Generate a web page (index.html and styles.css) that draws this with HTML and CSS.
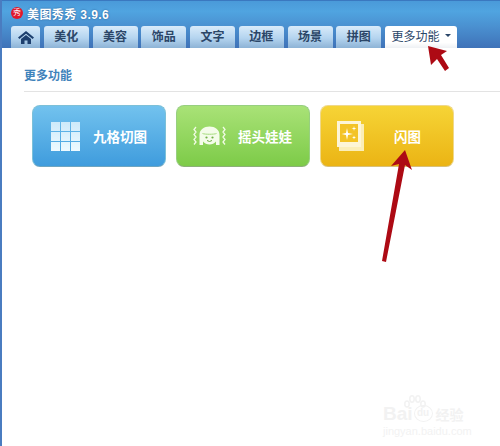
FILE: index.html
```html
<!doctype html>
<html>
<head>
<meta charset="utf-8">
<title>美图秀秀</title>
<link rel="stylesheet" href="styles.css">
</head>
<body>
<div id="wrap">
	<header>
		<div class="title">
			<span class="logo">秀</span>
			<span class="name">美图秀秀 3.9.6</span>
		</div>
		<ul class="tabs">
			<li class="home">
				<svg width="16" height="13" viewBox="0 0 16 13"><path d="M8 0 L16 6.6 L14.6 8 L8 2.7 L1.4 8 L0 6.6 Z" fill="#1d3f6e"/><path d="M3 8 L8 4 L13 8 V13 H9.5 V9.5 H6.5 V13 H3 Z" fill="#1d3f6e"/></svg>
			</li>
			<li>美化</li>
			<li>美容</li>
			<li>饰品</li>
			<li>文字</li>
			<li>边框</li>
			<li>场景</li>
			<li>拼图</li>
			<li class="on">更多功能<i class="caret"></i></li>
		</ul>
	</header>
	<div id="content">
		<h2>更多功能</h2>
		<div class="btns">
			<a class="btn blue" href="#">
				<svg class="ico1" width="29" height="29" viewBox="0 0 29 29"><defs><linearGradient id="g1" x1="0" y1="0" x2="0" y2="1"><stop offset="0" stop-color="#cdeafa"/><stop offset="1" stop-color="#eefaff"/></linearGradient></defs><path fill="url(#g1)" d="M0 0h9v9H0zM10 0h9v9h-9zM20 0h9v9h-9zM0 10h9v9H0zM10 10h9v9h-9zM20 10h9v9h-9zM0 20h9v9H0zM10 20h9v9h-9zM20 20h9v9h-9z"/></svg>
				<span>九格切图</span>
			</a>
			<a class="btn green" href="#">
				<svg class="ico2" width="33" height="20" viewBox="0 0 33 20">
					<path d="M3 1 L1 3.500 L3 6 L1 8.500 L3 11 L1 13.500 L3 16 L1 18.500 M30 1 L32 3.500 L30 6 L32 8.500 L30 11 L32 13.500 L30 16 L32 18.500" fill="none" stroke="#f1fbe4" stroke-width="1.300"/>
					<path d="M6.500 19 V9 C6.500 3.500 11 0.500 16.500 0.500 C22 0.500 26.500 3.500 26.500 9 V19 H23 V15.500 C21.500 17.500 19 18.500 16.500 18.500 C14 18.500 11.500 17.500 10 15.500 V19 Z" fill="#f4fce9"/>
					<path d="M9.500 7.500 C12 8.500 21 8.500 23.500 7.500" fill="none" stroke="#a5dc7c" stroke-width="1"/>
					<circle cx="13.500" cy="11.500" r="1.100" fill="#6fae45"/><circle cx="19.500" cy="11.500" r="1.100" fill="#6fae45"/>
					<path d="M14 14.500 Q16.500 16.500 19 14.500" fill="none" stroke="#6fae45" stroke-width="1"/>
				</svg>
				<span>摇头娃娃</span>
			</a>
			<a class="btn yellow" href="#">
				<svg class="ico3" width="27" height="30" viewBox="0 0 27 30">
					<rect x="2" y="3" width="25" height="27" fill="#fbeeb8"/>
					<rect x="0" y="0" width="24" height="26" fill="#fdf5d6"/>
					<rect x="3" y="3" width="18" height="18" fill="#f3c326"/>
					<path d="M10 7 L11 12 L16 13 L11 14 L10 19 L9 14 L4.500 13 L9 12 Z" fill="#fff"/>
					<path d="M17 5 L17.500 7 L19.500 7.500 L17.500 8 L17 10 L16.500 8 L14.500 7.500 L16.500 7 Z" fill="#fff"/>
					<path d="M17 14.500 L17.500 16 L19 16.500 L17.500 17 L17 18.500 L16.500 17 L15 16.500 L16.500 16 Z" fill="#fff"/>
				</svg>
				<span>闪图</span>
			</a>
		</div>
	</div>

	<div class="mark">
		<div class="mark_top">
			<span class="bai">Bai</span>
			<span class="du">du</span>
			<span class="jy">经验</span>
		</div>
		<div class="mark_url">jingyan.baidu.com</div>
		<svg class="paw" width="22" height="14" viewBox="0 0 22 14"><g fill="none" stroke="#f2f2f2" stroke-width="1.500"><ellipse cx="3" cy="9" rx="2.200" ry="3"/><ellipse cx="8" cy="4" rx="2.200" ry="3.200"/><ellipse cx="14" cy="4" rx="2.200" ry="3.200"/><ellipse cx="19" cy="9" rx="2.200" ry="3"/></g></svg>
	</div>

	<svg class="arrows" width="500" height="446" viewBox="0 0 500 446">
		<path d="M428 46 L447 51 L441 55 L449 68 L445 71 L437 59 L431 65 Z" fill="#ad0a14"/>
		<path d="M405 150 L412 170 L405 165 L386 262 L382 261 L399 164 L391 166 Z" fill="#ad0a14"/>
	</svg>
</div>
</body>
</html>
```

FILE: styles.css
```css
body,h2,ul,li,a,span{margin: 0; padding: 0;}
ul{list-style: none;}
a{text-decoration: none;}
body{
	font-family: "Liberation Sans","Noto Sans CJK SC",sans-serif;
}
#wrap{
	position: relative;
	width: 500px;
	height: 446px;
	overflow: hidden;
	box-sizing: border-box;
	border-left: 2px solid #4a7cc0;
	background-color: #fff;
}
header{
	height: 48px;
	margin-left: -2px;
	box-sizing: border-box;
	border-top: 1px solid #3a78c0;
	background: linear-gradient(#4a9ad9, #50a4e0 22%, #4a90d0 55%, #3f72b8);
}
.title{
	display: flex;
	align-items: center;
	height: 24px;
	padding-left: 11px;
}
.logo{
	width: 12px;
	height: 12px;
	margin-right: 4px;
	border-radius: 50%;
	background-color: #e0182c;
	color: #fff;
	font-size: 8px;
	line-height: 12px;
	text-align: center;
}
.name{
	font-size: 12px;
	font-weight: bold;
	color: #fff;
	letter-spacing: 0.4px;
	text-shadow: 0 0 2px #2a5a90;
}
.tabs{
	display: flex;
	gap: 3.750px;
	padding: 1px 0 0 11px;
}
.tabs li{
	display: flex;
	align-items: center;
	justify-content: center;
	width: 45px;
	height: 22px;
	box-sizing: border-box;
	padding-bottom: 3px;
	border-radius: 3px 3px 0 0;
	background: linear-gradient(#d9ebfa, #b4d4ef 55%, #8db3d6);
	font-size: 12px;
	font-weight: bold;
	color: #2b4668;
}
.tabs .home{
	width: 29px;
	padding-bottom: 0;
}
.tabs .on{
	width: 72px;
	background: linear-gradient(#fff, #fff 75%, #eef1f4);
	font-weight: normal;
	color: #2b4668;
}
.caret{
	width: 0;
	height: 0;
	margin-left: 5px;
	border: 3px solid transparent;
	border-top: 3px solid #2b4668;
	border-bottom: 0;
}
#content{
	padding: 21px 0 0 22px;
}
h2{
	height: 22px;
	border-bottom: 1px solid #e3e3e3;
	font-size: 12px;
	font-weight: bold;
	line-height: 14px;
	color: #3f83bb;
}
.btns{
	display: flex;
	gap: 10px;
	padding: 13px 0 0 8px;
}
.btn{
	display: flex;
	align-items: center;
	width: 134px;
	height: 62px;
	box-sizing: border-box;
	border-radius: 8px;
	font-size: 13.500px;
	font-weight: bold;
	color: #fff;
}
.blue{
	padding-left: 18px;
	border: 1px solid #7cc0d8;
	border-bottom-color: #6ea5c0;
	background: linear-gradient(#72c2ee, #3f9cdd);
}
.green{
	padding-left: 16px;
	border: 1px solid #97cf80;
	border-bottom-color: #8cb078;
	background: linear-gradient(#a9e277, #7dcb48);
}
.yellow{
	padding-left: 16px;
	border: 1px solid #efd88a;
	border-bottom-color: #d8c078;
	background: linear-gradient(#f6d436, #ebb414);
}
.ico1{margin-right: 13px;}
.ico2{margin-right: 12px;}
.ico3{margin-right: 30px;}
.mark{
	position: absolute;
	left: 381px;
	top: 395px;
	width: 100px;
	color: #f2f2f2;
}
.mark_top{
	display: flex;
	align-items: flex-end;
	height: 30px;
}
.bai{
	font-size: 19px;
	font-weight: bold;
	line-height: 22px;
}
.du{
	width: 17px;
	height: 15px;
	margin: 0 3px 3px 1px;
	border: 1px solid #f2f2f2;
	border-radius: 50%;
	font-size: 10px;
	font-weight: bold;
	line-height: 14px;
	text-align: center;
}
.jy{
	font-size: 14px;
	font-weight: bold;
	line-height: 20px;
}
.mark_url{
	font-size: 11px;
	line-height: 13px;
}
.paw{
	position: absolute;
	left: 21px;
	top: 0;
}
.arrows{
	position: absolute;
	left: -2px;
	top: 0;
}
```
